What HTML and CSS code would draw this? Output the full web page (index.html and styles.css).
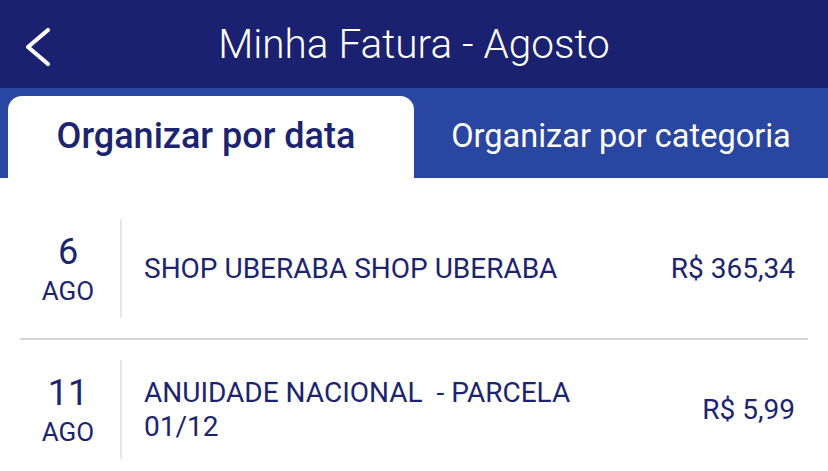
FILE: index.html
```html
<!DOCTYPE html>
<html lang="pt-BR">
<head>
<meta charset="utf-8">
<title>Minha Fatura - Agosto</title>
<link rel="stylesheet" href="styles.css">
</head>
<body>
<header class="topbar">
  <div class="back">
    <svg class="back-icon" width="30" height="44" viewBox="0 0 30 44" aria-hidden="true">
      <path d="M24 5 L4 22 L24 39" fill="none" stroke="#ffffff" stroke-width="4.2" stroke-linecap="round" stroke-linejoin="round"/>
    </svg>
  </div>
  <h1 class="title">Minha Fatura - Agosto</h1>
  <div class="spacer"></div>
</header>
<nav class="tabs">
  <div class="tab tab-active">Organizar por data</div>
  <div class="tab">Organizar por categoria</div>
</nav>
<main class="list">
  <div class="row">
    <div class="date">
      <span class="day">6</span>
      <span class="month">AGO</span>
    </div>
    <div class="desc">SHOP UBERABA SHOP UBERABA</div>
    <div class="amount">R$ 365,34</div>
  </div>
  <div class="row">
    <div class="date">
      <span class="day">11</span>
      <span class="month">AGO</span>
    </div>
    <div class="desc">ANUIDADE NACIONAL&nbsp; - PARCELA<br>01/12</div>
    <div class="amount">R$ 5,99</div>
  </div>
</main>
</body>
</html>
```
FILE: styles.css
```css
* { box-sizing: border-box; }
html, body {
  margin: 0;
  padding: 0;
  background: #ffffff;
  font-family: Roboto, "Liberation Sans", sans-serif;
  overflow: hidden;
}
.topbar {
  height: 88px;
  background: #1a2170;
  display: grid;
  grid-template-columns: 1fr auto 1fr;
  align-items: center;
}
.back {
  padding-left: 24px;
  display: flex;
  align-items: center;
  padding-top: 1px;
}
.back-icon { display: block; }
.title {
  margin: 0;
  color: #ffffff;
  font-weight: 300;
  font-size: 40.5px;
  line-height: 88px;
  padding-bottom: 4px;
  white-space: nowrap;
}
.tabs {
  height: 90px;
  background: #2946a1;
  padding: 8px 0 0 8px;
  display: flex;
}
.tab {
  flex: 1;
  display: flex;
  align-items: center;
  justify-content: center;
  color: #ffffff;
  font-size: 32.5px;
  font-weight: 400;
  padding-bottom: 2px;
  white-space: nowrap;
}
.tab-active {
  flex: 0 0 406px;
  background: #ffffff;
  color: #1c2470;
  font-size: 36px;
  font-weight: 500;
  border-radius: 14px 14px 0 0;
  padding-right: 10px;
}
.list {
  padding: 21px 20px 0 20px;
}
.row {
  display: flex;
  align-items: center;
  padding: 20px 13px 20px 0;
  border-bottom: 2px solid #d6d6d6;
  color: #1c2470;
}
.date {
  width: 96px;
  height: 99px;
  display: flex;
  flex-direction: column;
  align-items: center;
  justify-content: center;
  padding-top: 5px;
}
.day {
  font-size: 36px;
  line-height: 40px;
}
.month {
  font-size: 26px;
  line-height: 39px;
}
.desc {
  flex: 1;
  align-self: stretch;
  display: flex;
  align-items: center;
  border-left: 2px solid #e6e6e6;
  margin-left: 4px;
  padding-left: 22px;
  font-size: 28px;
  line-height: 34px;
}
.amount {
  font-size: 28px;
  white-space: nowrap;
}
```
